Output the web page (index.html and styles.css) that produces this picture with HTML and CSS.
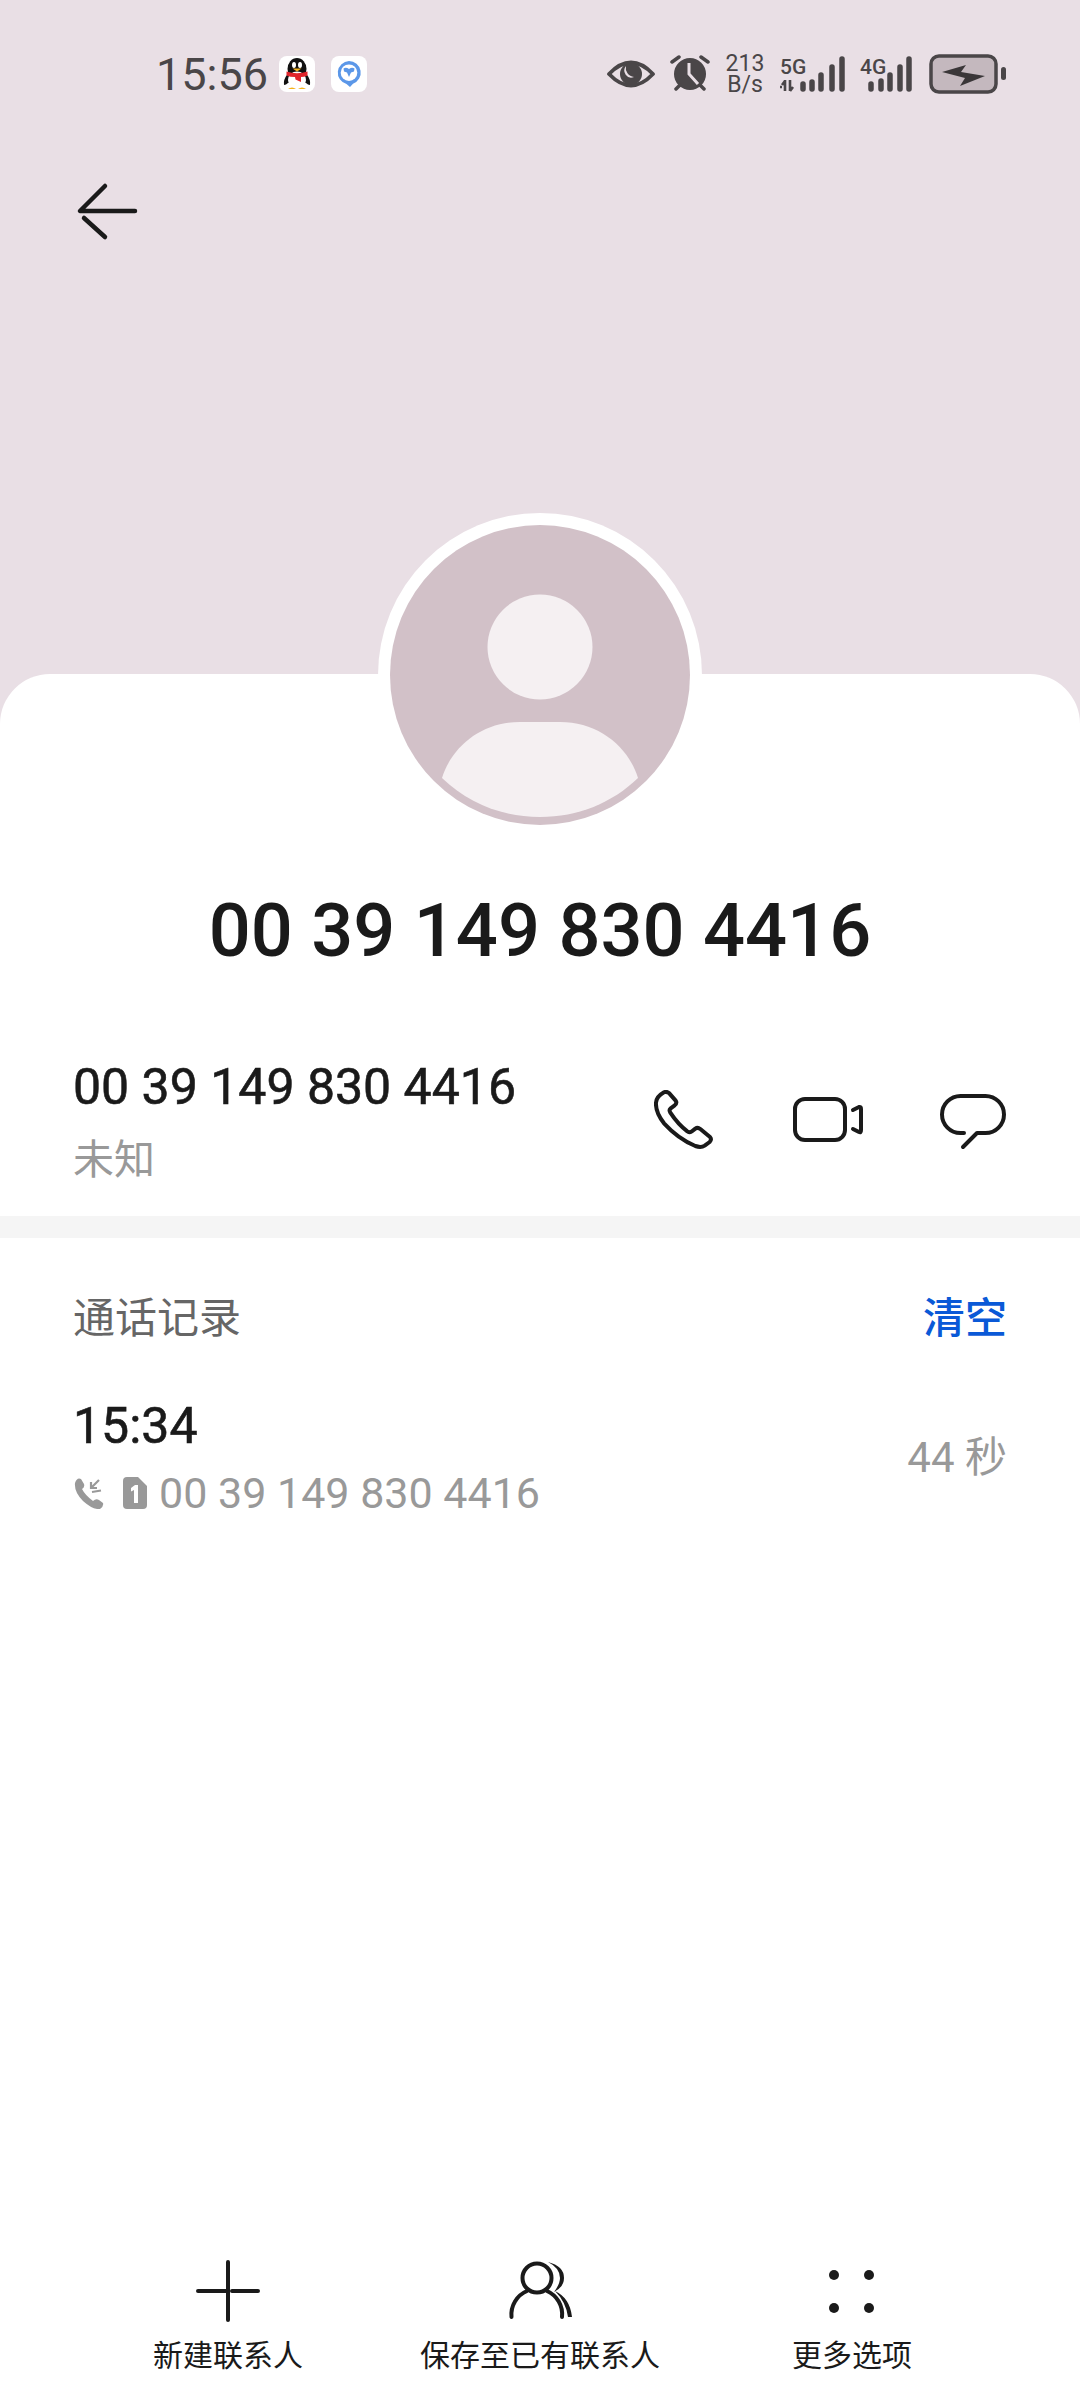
FILE: index.html
```html
<!DOCTYPE html>
<html lang="zh">
<head>
<meta charset="utf-8">
<title>通话详情</title>
<link rel="stylesheet" href="styles.css">
</head>
<body>
<div class="screen">
  <header class="hero">
    <div class="status">
      <div class="status-left">
        <span class="clock">15:56</span>
        <svg class="tile" width="36" height="36" viewBox="0 0 36 36">
          <rect width="36" height="36" rx="8" fill="#fff"/>
          <ellipse cx="18" cy="13" rx="9.500" ry="11" fill="#111"/>
          <path d="M8.500 18 Q4 24 5 29 Q7 29 9 27 L27 27 Q29 29 31 29 Q32 24 27.500 18Z" fill="#111"/>
          <ellipse cx="18" cy="24" rx="9" ry="8.500" fill="#fff"/>
          <ellipse cx="15" cy="9" rx="2" ry="3" fill="#fff"/>
          <ellipse cx="21" cy="9" rx="2" ry="3" fill="#fff"/>
          <path d="M13.500 12.500 H22.500 L18 15.500Z" fill="#F5B21B"/>
          <path d="M7.500 15.500 Q18 19 28.500 15.500 L28.500 19.500 Q25 21 22 21 L22 26 L16.500 23.500 L16 21 Q11 21 7.500 19.500Z" fill="#E0242B"/>
          <path d="M9 33 Q13 30 17 33Z M19 33 Q23 30 27 33Z" fill="#F5B21B"/>
        </svg>
        <svg class="tile tile-pin" width="36" height="36" viewBox="0 0 36 36">
          <rect width="36" height="36" rx="8" fill="#fff"/>
          <path d="M18 5 A11.700 11.700 0 0 1 22 27.700 L19 31 L15.500 28 A11.700 11.700 0 0 1 18 5Z" fill="#5B97E8"/>
          <circle cx="18" cy="16.700" r="8.300" fill="#fff"/>
          <path d="M12.500 12.500 Q15 11 18 13 Q21 11 23.500 12.500 L23 15.500 L20 16.500 L18 21 L16 16.500 L13 15.500Z" fill="#5B97E8"/>
        </svg>
      </div>
      <div class="status-right">
        <svg class="ic-eye" width="48" height="32" viewBox="0 0 48 32">
          <path d="M2 16 Q24 -7 46 16 Q24 39 2 16Z" fill="none" stroke="#4a4648" stroke-width="3.800" stroke-linejoin="round"/>
          <circle cx="24" cy="16" r="11" fill="#4a4648"/>
          <path d="M19 8 A9 9 0 0 0 27 19 A7 7 0 0 1 19 8Z" fill="#E9DFE5"/>
        </svg>
        <svg class="ic-alarm" width="40" height="38" viewBox="0 0 40 38">
          <circle cx="20" cy="19" r="16" fill="#4a4648"/>
          <path d="M2 7 L9 2 M38 7 L31 2 M6 34 L10 30 M34 34 L30 30" stroke="#4a4648" stroke-width="3.500" stroke-linecap="round"/>
          <path d="M19 8 V19 L28 29" fill="none" stroke="#E9DFE5" stroke-width="3"/>
        </svg>
        <div class="speed">213
B/s</div>
        <div class="net net-5g">
          <span class="net-label">5G</span>
          <svg class="bars" width="66" height="36" viewBox="0 0 66 36">
            <path d="M5 24 V35 M2 29 L5 25 M10 24 V35 M10 35 L13 31 M2 31 H0" stroke="#4a4648" stroke-width="2.600" fill="none"/>
            <g stroke="#4a4648" stroke-width="5.500" stroke-linecap="round">
              <path d="M23 28 V33 M32 26 V33 M41 19 V33 M52 11 V33 M62 3 V33"/>
            </g>
          </svg>
        </div>
        <div class="net net-4g">
          <span class="net-label">4G</span>
          <svg class="bars" width="53" height="36" viewBox="0 0 53 36">
            <g stroke="#4a4648" stroke-width="5.500" stroke-linecap="round">
              <path d="M11 28 V33 M21 25 V33 M30 19 V33 M40 11 V33 M49 3 V33"/>
            </g>
          </svg>
        </div>
        <svg class="ic-batt" width="77" height="40" viewBox="0 0 77 40">
          <rect x="2" y="2" width="65" height="36" rx="8" fill="#C4B8BE" stroke="#4a4648" stroke-width="3.500"/>
          <path d="M13 18 L37 11 L32 18 L56 22 L31 32 L36 24Z" fill="#3a3638"/>
          <rect x="72" y="13" width="5" height="13" rx="2.500" fill="#4a4648"/>
        </svg>
      </div>
    </div>
    <div class="topnav">
      <svg class="ic-back" width="64" height="64" viewBox="0 0 64 64">
        <path d="M30 7 L5 32 H60 M9 39 L30 58" fill="none" stroke="#1a1a1a" stroke-width="4.500" stroke-linecap="round" stroke-linejoin="round"/>
      </svg>
    </div>
  </header>
  <main class="sheet">
    <div class="avatar">
      <svg width="300" height="300" viewBox="0 0 300 300">
        <circle cx="150" cy="150" r="150" fill="#D2C1C8"/>
        <circle cx="150" cy="122" r="52.500" fill="#F5F0F2"/>
        <path d="M52 253 C62 221 92 197 130 197 H170 C208 197 238 221 248 253 C222 278 188 292 150 292 C112 292 78 278 52 253Z" fill="#F5F0F2"/>
      </svg>
    </div>
    <h1 class="title">00 39 149 830 4416</h1>
    <section class="number-row">
      <div class="number-text">
        <div class="number">00 39 149 830 4416</div>
        <div class="number-sub">未知</div>
      </div>
      <div class="actions">
        <svg class="ic-phone" width="60" height="60" viewBox="0 0 180 180">
          <path d="M30 7 Q38 3 46 10 L65 32 Q70 39 62 46 L50 55 Q44 60 49 68 Q72 103 100 124 Q108 129 114 124 L124 116 Q131 111 139 117 L168 141 Q174 148 167 156 L152 167 Q141 174 124 168 Q72 146 30 100 Q4 66 6 38 Q7 20 30 7Z" fill="none" stroke="#1a1a1a" stroke-width="12" stroke-linejoin="round"/>
        </svg>
        <svg class="ic-video" width="72" height="50" viewBox="0 0 72 50">
          <rect x="2" y="4" width="50" height="41" rx="10" fill="none" stroke="#1a1a1a" stroke-width="4"/>
          <path d="M60 15 L66 12 Q68 11.500 68 14 V35 Q68 38 66 37 L60 34" fill="none" stroke="#1a1a1a" stroke-width="4" stroke-linecap="round" stroke-linejoin="round"/>
        </svg>
        <svg class="ic-msg" width="66" height="60" viewBox="0 0 66 60">
          <path d="M24 43 H20.500 A18.500 18.500 0 0 1 20.500 6 H45.500 A18.500 18.500 0 0 1 45.500 43 H37 L23 57" fill="none" stroke="#1a1a1a" stroke-width="4" stroke-linecap="round" stroke-linejoin="round"/>
        </svg>
      </div>
    </section>
    <div class="divider"></div>
    <section class="log">
      <div class="log-head">
        <span class="log-title">通话记录</span>
        <span class="log-clear">清空</span>
      </div>
      <div class="log-item">
        <div class="log-main">
          <div class="log-time">15:34</div>
          <div class="log-detail">
            <svg width="32" height="32" viewBox="0 0 32 32">
              <path d="M2 6 Q4 0 8 2 L11 7 Q12 10 9 12 Q12 18 20 24 Q23 21 26 23 L30 26 Q31 29 27 32 Q20 33 10 24 Q1 15 2 6Z" fill="#999"/>
              <path d="M26 3 L18 11 M18 5 V11 H24 M19 15 L28 13.500" fill="none" stroke="#999" stroke-width="2.200"/>
            </svg>
            <svg class="sim" width="24" height="32" viewBox="0 0 24 32">
              <path d="M4 0 H15 L24 9 V28 Q24 32 20 32 H4 Q0 32 0 28 V4 Q0 0 4 0Z" fill="#999"/>
              <path d="M8 11 L12 8 H15 V26 H11 V13 L8 14.500Z" fill="#fff"/>
            </svg>
            <span class="log-number">00 39 149 830 4416</span>
          </div>
        </div>
        <div class="log-dur">44 秒</div>
      </div>
    </section>
    <nav class="bottom">
      <div class="tab">
        <svg width="64" height="64" viewBox="0 0 64 64">
          <path d="M2 31 H30 M36 31 H62 M32 2 V60" fill="none" stroke="#1a1a1a" stroke-width="4" stroke-linecap="round"/>
        </svg>
        <span>新建联系人</span>
      </div>
      <div class="tab">
        <svg width="64" height="64" viewBox="0 0 64 64">
          <circle cx="29" cy="18" r="14.500" fill="none" stroke="#1a1a1a" stroke-width="4"/>
          <path d="M3.500 57 A25.500 25.500 0 0 1 19 31 M39 31 A25.500 25.500 0 0 1 54 57" fill="none" stroke="#1a1a1a" stroke-width="4" stroke-linecap="round"/>
          <path d="M40 2 Q56 6 56 18 Q56 27 46 32 Q52 24 52 18 Q52 8 40 2Z M47 31 Q62 38 64 57 L60 57 Q58 42 47 31Z" fill="#1a1a1a"/>
        </svg>
        <span>保存至已有联系人</span>
      </div>
      <div class="tab">
        <svg width="64" height="64" viewBox="0 0 64 64">
          <circle cx="14" cy="15" r="5" fill="#1a1a1a"/><circle cx="49" cy="15" r="5" fill="#1a1a1a"/>
          <circle cx="14" cy="48" r="5" fill="#1a1a1a"/><circle cx="49" cy="48" r="5" fill="#1a1a1a"/>
        </svg>
        <span>更多选项</span>
      </div>
    </nav>
  </main>
</div>
</body>
</html>
```
FILE: styles.css
```css
* { box-sizing: border-box; margin: 0; padding: 0; }
html, body { width: 1080px; height: 2400px; background: #E9DFE5; }
body { font-family: "Roboto", "Noto Sans CJK SC", sans-serif; color: #1a1a1a; overflow: hidden; }
.screen { width: 1080px; height: 2400px; display: flex; flex-direction: column; }
svg { display: block; flex: none; }

.hero { height: 674px; flex: none; }
.status { height: 148px; padding: 0 74px 0 156px; display: flex; align-items: center; justify-content: space-between; }
.status-left { display: flex; align-items: center; }
.clock { font-size: 45px; color: #4a4648; width: 123px; }
.tile-pin { margin-left: 16px; }
.status-right { display: flex; align-items: center; }
.ic-alarm { margin-left: 15px; }
.speed { width: 40px; margin-left: 15px; text-align: center; white-space: pre-line; font-size: 23px; line-height: 21px; color: #4a4648; }
.net { position: relative; }
.net-5g { margin-left: 15px; }
.net-4g { margin-left: 14px; }
.net-label { position: absolute; left: 0; top: 1px; font-size: 21px; line-height: 21px; font-weight: 500; color: #4a4648; }
.ic-batt { margin-left: 16px; }
.topnav { padding: 31px 0 0 75px; }

.sheet { flex: 1; position: relative; display: flex; flex-direction: column; background: #fff; border-radius: 50px 50px 0 0; }
.avatar { position: absolute; left: 378px; top: -161px; width: 324px; height: 324px; padding: 12px; border-radius: 50%; background: #fff; }
.title { margin-top: 215px; text-align: center; font-size: 74px; line-height: 84px; font-weight: 500; color: #1a1a1a; }
.number-row { margin-top: 53px; height: 190px; padding: 0 74px 0 73px; display: flex; justify-content: space-between; align-items: flex-start; }
.number { font-size: 50px; line-height: 64px; font-weight: 400; -webkit-text-stroke: 0.6px #1a1a1a; padding-top: 29px; }
.number-sub { font-size: 41px; line-height: 56px; color: #999; margin-top: 13px; }
.actions { display: flex; align-items: center; padding-top: 64px; }
.ic-video { margin-left: 79px; }
.ic-msg { margin-left: 75px; }
.divider { height: 22px; background: #F5F5F5; flex: none; }
.log { padding: 47px 73px 0 73px; }
.log-head { display: flex; justify-content: space-between; align-items: center; height: 58px; }
.log-title { font-size: 42px; color: #666; }
.log-clear { font-size: 42px; font-weight: 500; color: #0A59D7; }
.log-item { margin-top: 53px; display: flex; justify-content: space-between; align-items: center; }
.log-time { font-size: 50px; line-height: 60px; font-weight: 400; -webkit-text-stroke: 0.6px #1a1a1a; }
.log-detail { display: flex; align-items: center; margin-top: 11px; height: 52px; color: #999; }
.sim { margin-left: 18px; }
.log-number { font-size: 43px; margin-left: 12px; }
.log-dur { font-size: 42px; color: #999; padding-bottom: 8px; }
.bottom { margin-top: auto; padding: 0 72px 24px; display: grid; grid-template-columns: repeat(3, 312px); }
.tab { display: flex; flex-direction: column; align-items: center; gap: 12px; }
.tab span { font-size: 30px; line-height: 40px; color: #1a1a1a; white-space: nowrap; }
```
